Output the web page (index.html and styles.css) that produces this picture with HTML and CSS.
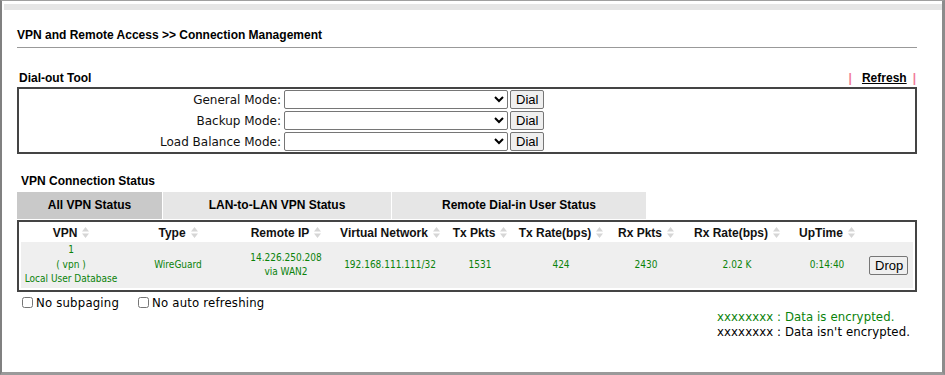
FILE: index.html
```html
<!DOCTYPE html>
<html lang="en">
<head>
  <meta charset="UTF-8" />
  <title>VPN and Remote Access - Connection Management</title>
  <link rel="stylesheet" href="styles.css">
</head>
<body>
<div class="frame">
  <div class="topbar"></div>
  <div class="content">

    <div class="page-title">VPN and Remote Access &gt;&gt; Connection Management</div>

    <!-- Dial-out Tool -->
    <div class="section-head">
      <span>Dial-out Tool</span>
      <span class="refresh"><span class="bar">|</span><a href="#">Refresh</a><span class="bar">|</span></span>
    </div>
    <div class="dial-box">
      <div class="dial-row">
        <label>General Mode:</label>
        <select><option></option></select>
        <button class="btn">Dial</button>
      </div>
      <div class="dial-row">
        <label>Backup Mode:</label>
        <select><option></option></select>
        <button class="btn">Dial</button>
      </div>
      <div class="dial-row">
        <label>Load Balance Mode:</label>
        <select><option></option></select>
        <button class="btn">Dial</button>
      </div>
    </div>

    <!-- VPN Connection Status -->
    <div class="section-head status-head">VPN Connection Status</div>
    <div class="tabs">
      <div class="tab tab-all active">All VPN Status</div>
      <div class="tab tab-lan">LAN-to-LAN VPN Status</div>
      <div class="tab tab-dial">Remote Dial-in User Status</div>
    </div>

    <table class="vpn-table">
      <colgroup>
        <col style="width:100px">
        <col style="width:114px">
        <col style="width:102px">
        <col style="width:106px">
        <col style="width:74px">
        <col style="width:88px">
        <col style="width:82px">
        <col style="width:100px">
        <col style="width:80px">
        <col style="width:46px">
      </colgroup>
      <tr>
        <th>VPN<svg class="sort" width="7" height="11" viewBox="0 0 7 11"><path d="M3.5 0L7 4.5H0z M0 6.5H7L3.5 11z"/></svg></th>
        <th>Type<svg class="sort" width="7" height="11" viewBox="0 0 7 11"><path d="M3.5 0L7 4.5H0z M0 6.5H7L3.5 11z"/></svg></th>
        <th>Remote IP<svg class="sort" width="7" height="11" viewBox="0 0 7 11"><path d="M3.5 0L7 4.5H0z M0 6.5H7L3.5 11z"/></svg></th>
        <th>Virtual Network<svg class="sort" width="7" height="11" viewBox="0 0 7 11"><path d="M3.5 0L7 4.5H0z M0 6.5H7L3.5 11z"/></svg></th>
        <th>Tx Pkts<svg class="sort" width="7" height="11" viewBox="0 0 7 11"><path d="M3.5 0L7 4.5H0z M0 6.5H7L3.5 11z"/></svg></th>
        <th>Tx Rate(bps)<svg class="sort" width="7" height="11" viewBox="0 0 7 11"><path d="M3.5 0L7 4.5H0z M0 6.5H7L3.5 11z"/></svg></th>
        <th>Rx Pkts<svg class="sort" width="7" height="11" viewBox="0 0 7 11"><path d="M3.5 0L7 4.5H0z M0 6.5H7L3.5 11z"/></svg></th>
        <th>Rx Rate(bps)<svg class="sort" width="7" height="11" viewBox="0 0 7 11"><path d="M3.5 0L7 4.5H0z M0 6.5H7L3.5 11z"/></svg></th>
        <th>UpTime<svg class="sort" width="7" height="11" viewBox="0 0 7 11"><path d="M3.5 0L7 4.5H0z M0 6.5H7L3.5 11z"/></svg></th>
        <th></th>
      </tr>
      <tr class="data-row">
        <td>1<br>( vpn )<br>Local User Database</td>
        <td>WireGuard</td>
        <td>14.226.250.208<br>via WAN2</td>
        <td>192.168.111.111/32</td>
        <td>1531</td>
        <td>424</td>
        <td>2430</td>
        <td>2.02 K</td>
        <td>0:14:40</td>
        <td class="drop-cell"><button class="btn">Drop</button></td>
      </tr>
    </table>

    <div class="options">
      <label><input type="checkbox">No subpaging</label>
      <label><input type="checkbox">No auto refreshing</label>
    </div>

    <div class="legend">
      <div class="enc">xxxxxxxx : Data is encrypted.</div>
      <div>xxxxxxxx : Data isn't encrypted.</div>
    </div>

  </div>
</div>
</body>
</html>
```

FILE: styles.css
```css
body {
  margin: 0;
  font-family: "Liberation Sans", Arial, sans-serif;
  font-size: 12px;
  color: #000;
  background: #fff;
}
.frame {
  box-sizing: border-box;
  width: 945px;
  height: 375px;
  border-top: 1px solid #a0a0a0;
  border-left: 2px solid #808080;
  border-right: 3px solid #8c8c8c;
  border-bottom: 3px solid #9a9a9a;
}
.topbar {
  height: 6px;
  margin: 3px 0 0 2px;
  background: #e6e6e6;
}
.content {
  padding: 0 25px 0 15px;
}
.page-title {
  margin-top: 18px;
  padding-bottom: 5px;
  line-height: 14px;
  font-weight: bold;
  border-bottom: 1px solid #999;
}
.section-head {
  display: flex;
  justify-content: space-between;
  margin-top: 23px;
  padding-left: 2px;
  line-height: 14px;
  font-weight: bold;
}
.refresh {
  padding-right: 1px;
}
.refresh .bar {
  color: #f27c9a;
}
.refresh a {
  color: #000;
  margin: 0 6px 0 10px;
}
.dial-box {
  margin-top: 2px;
  border: 2px solid #444;
}
.dial-row {
  display: flex;
  align-items: center;
  height: 21px;
}
.dial-row label {
  box-sizing: border-box;
  width: 265px;
  padding-right: 3px;
  text-align: right;
  font-family: "DejaVu Sans", sans-serif;
  font-size: 12px;
  color: #111;
}
.dial-row select {
  width: 224px;
  height: 19px;
  margin: 0 2px 0 0;
  padding: 0;
  font-size: 12px;
  border: 1px solid #767676;
  border-radius: 2px;
  background: #fff;
}
.btn {
  height: 19px;
  padding: 0 5px;
  font-family: "Liberation Sans", Arial, sans-serif;
  font-size: 13px;
  color: #000;
  background: #efefef;
  border: 1px solid #767676;
  border-radius: 2px;
}
.status-head {
  margin-top: 20px;
  padding-left: 4px;
}
.tabs {
  display: flex;
  gap: 1px;
  margin-top: 4px;
}
.tab {
  height: 27px;
  line-height: 27px;
  text-align: center;
  font-weight: bold;
  background: #e6e6e6;
}
.tab.active {
  background: #c9c9c9;
}
.tab-all { width: 145px; }
.tab-lan { width: 228px; }
.tab-dial { width: 254px; }
.vpn-table {
  box-sizing: border-box;
  width: 900px;
  margin-top: 1px;
  padding: 2px;
  table-layout: fixed;
  border: 2px solid #444;
  border-spacing: 0;
}
.vpn-table th {
  height: 18px;
  padding: 0;
  font-size: 12px;
  font-weight: bold;
  color: #111;
  white-space: nowrap;
}
.sort {
  margin-left: 5px;
  vertical-align: -1px;
  fill: #d6d6d6;
}
.vpn-table td {
  height: 46px;
  padding: 0;
  text-align: center;
  background: #efefef;
  color: #0a820a;
  font-family: "DejaVu Sans Condensed", "DejaVu Sans", sans-serif;
  font-size: 10px;
  line-height: 14.5px;
  white-space: nowrap;
}
.vpn-table td.drop-cell {
  text-align: left;
  padding-left: 2px;
}
.drop-cell .btn {
  width: 39px;
  height: 19px;
}
.options {
  display: flex;
  gap: 19px;
  margin-top: 3px;
  padding-left: 5px;
  font-family: "DejaVu Sans Condensed", "DejaVu Sans", sans-serif;
  font-size: 13px;
  letter-spacing: 0.2px;
}
.options input {
  width: 11px;
  height: 11px;
  margin: 0 3px 0 0;
  vertical-align: -1px;
}
.legend {
  width: fit-content;
  margin: -1px 7px 0 auto;
  font-family: "DejaVu Sans Condensed", "DejaVu Sans", sans-serif;
  font-size: 13px;
  letter-spacing: 0.1px;
  line-height: 15px;
}
.legend .enc {
  color: #0a820a;
}
```
